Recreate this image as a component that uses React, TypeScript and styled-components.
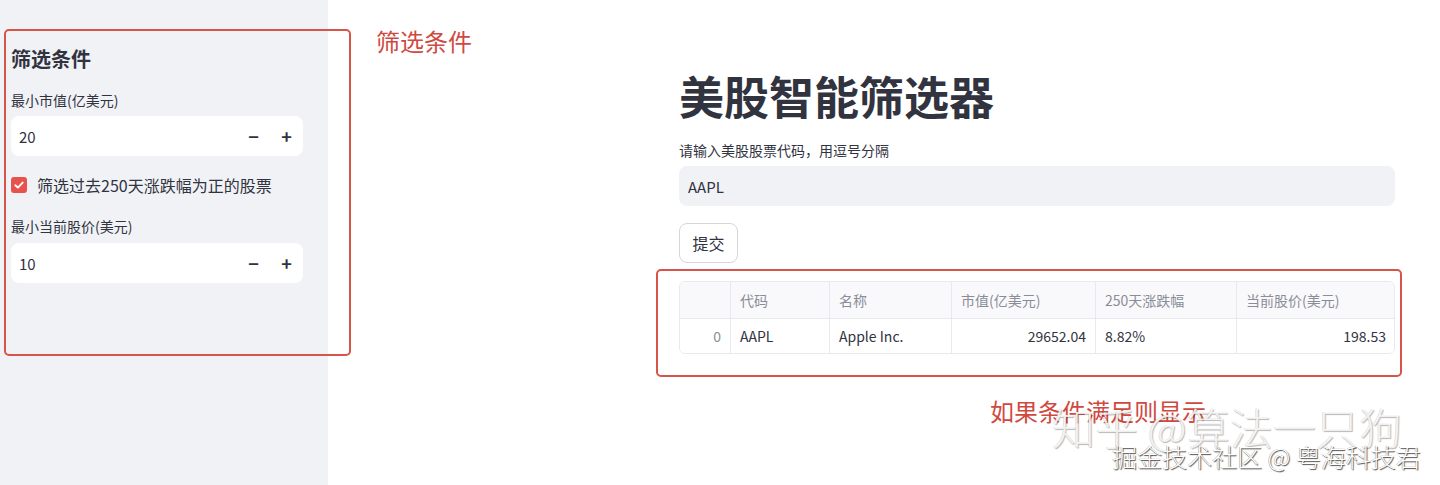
import React from "react";
import styled, { createGlobalStyle } from "styled-components";

const Global = createGlobalStyle`
  html, body { margin: 0; padding: 0; background: #ffffff; }
  body { font-family: "Noto Sans CJK SC", "Noto Sans", sans-serif; color: #31333f; }
  * { box-sizing: border-box; }
`;

const Page = styled.div`
  position: relative;
  display: flex;
  width: 1440px;
  height: 485px;
  overflow: hidden;
`;

const Sidebar = styled.aside`
  width: 328px;
  flex: none;
  background: #f0f2f6;
  padding: 45px 25px 0 11px;
  display: flex;
  flex-direction: column;
`;

const SideTitle = styled.h2`
  margin: 0 0 17px;
  font-size: 20px;
  line-height: 28px;
  font-weight: 700;
  color: #31333f;
`;

const FieldLabel = styled.div<{ $mt?: number; $mb?: number }>`
  font-size: 14px;
  line-height: 20px;
  color: #31333f;
  margin-top: ${(p) => p.$mt ?? 0}px;
  margin-bottom: ${(p) => p.$mb ?? 6}px;
`;

const NumberBox = styled.div`
  height: 40px;
  background: #ffffff;
  border-radius: 8px;
  display: flex;
  align-items: center;
  padding-left: 8px;
`;

const NumberValue = styled.span`
  flex: 1;
  font-size: 15px;
  color: #31333f;
`;

const StepButton = styled.span`
  width: 33px;
  height: 40px;
  display: flex;
  align-items: center;
  justify-content: center;
  font-size: 18px;
  font-weight: 700;
  color: #31333f;
`;

const CheckRow = styled.label`
  display: flex;
  align-items: center;
  gap: 10px;
  margin-top: 17px;
  height: 24px;
  font-size: 16px;
  color: #31333f;
`;

const CheckBox = styled.span`
  width: 16px;
  height: 16px;
  border-radius: 3px;
  background: #e8524d;
  display: flex;
  align-items: center;
  justify-content: center;
`;

const Main = styled.main`
  flex: 1;
  padding: 68px 45px 0 351px;
  display: flex;
  flex-direction: column;
  align-items: flex-start;
`;

const Title = styled.h1`
  margin: 0 0 16px;
  font-size: 45px;
  line-height: 56px;
  font-weight: 700;
  color: #31333f;
`;

const TextInput = styled.div`
  width: 100%;
  height: 40px;
  background: #f0f2f6;
  border-radius: 8px;
  display: flex;
  align-items: center;
  padding-left: 9px;
  font-size: 15px;
  color: #31333f;
`;

const Button = styled.button`
  margin-top: 17px;
  width: 59px;
  height: 40px;
  border: 1px solid #d6d6d9;
  border-radius: 8px;
  background: #ffffff;
  font-family: inherit;
  font-size: 16px;
  color: #31333f;
`;

const Table = styled.div`
  margin-top: 18px;
  width: 716px;
  border: 1px solid #e8e9ee;
  border-radius: 6px;
  overflow: hidden;
  display: grid;
  grid-template-columns: 51px 99px 122px 144px 141px 158px;
`;

const Cell = styled.div<{ $head?: boolean; $right?: boolean; $index?: boolean; $last?: boolean }>`
  height: ${(p) => (p.$head ? 37 : 34)}px;
  display: flex;
  align-items: center;
  justify-content: ${(p) => (p.$right ? "flex-end" : "flex-start")};
  padding: 0 9px;
  font-size: 14px;
  color: ${(p) => (p.$head || p.$index ? "#8a8d98" : "#31333f")};
  background: ${(p) => (p.$head ? "#f9f9fb" : "#ffffff")};
  border-right: ${(p) => (p.$last ? "none" : "1px solid #e8e9ee")};
  border-bottom: ${(p) => (p.$head ? "1px solid #e8e9ee" : "none")};
`;

const AnnoBox = styled.div<{ $l: number; $t: number; $w: number; $h: number }>`
  position: absolute;
  left: ${(p) => p.$l}px;
  top: ${(p) => p.$t}px;
  width: ${(p) => p.$w}px;
  height: ${(p) => p.$h}px;
  border: 2px solid #d6544a;
  border-radius: 5px;
  pointer-events: none;
`;

const AnnoText = styled.div<{ $l: number; $t: number }>`
  position: absolute;
  left: ${(p) => p.$l}px;
  top: ${(p) => p.$t}px;
  font-size: 24px;
  line-height: 24px;
  color: #d0493f;
  white-space: nowrap;
`;

const Watermark = styled.div<{ $l: number; $t: number; $size: number; $strong?: boolean }>`
  position: absolute;
  left: ${(p) => p.$l}px;
  top: ${(p) => p.$t}px;
  font-size: ${(p) => p.$size}px;
  line-height: ${(p) => p.$size}px;
  font-weight: 300;
  white-space: nowrap;
  color: ${(p) => (p.$strong ? "#ffffff" : "rgba(255,255,255,0.85)")};
  text-shadow: ${(p) =>
    p.$strong
      ? "1px 1px 1px rgba(0,0,0,0.7), -0.5px -0.5px 0.5px rgba(0,0,0,0.4)"
      : "1px 1px 1px rgba(0,0,0,0.28), -0.5px -0.5px 0.5px rgba(0,0,0,0.2)"};
`;

const NumberInput = ({ value }: { value: string }) => (
  <NumberBox>
    <NumberValue>{value}</NumberValue>
    <StepButton>−</StepButton>
    <StepButton>+</StepButton>
  </NumberBox>
);

const headers = ["", "代码", "名称", "市值(亿美元)", "250天涨跌幅", "当前股价(美元)"];
const row = [
  { v: "0", right: true, index: true },
  { v: "AAPL" },
  { v: "Apple Inc." },
  { v: "29652.04", right: true },
  { v: "8.82%" },
  { v: "198.53", right: true },
];

export default function App() {
  return (
    <Page>
      <Global />
      <Sidebar>
        <SideTitle>筛选条件</SideTitle>
        <FieldLabel>最小市值(亿美元)</FieldLabel>
        <NumberInput value="20" />
        <CheckRow>
          <CheckBox>
            <svg width="12" height="12" viewBox="0 0 12 12">
              <path d="M2.3 6.2 L4.9 8.6 L9.7 3.6" fill="none" stroke="#fff" strokeWidth="1.9" strokeLinecap="round" strokeLinejoin="round" />
            </svg>
          </CheckBox>
          筛选过去250天涨跌幅为正的股票
        </CheckRow>
        <FieldLabel $mt={19} $mb={7}>最小当前股价(美元)</FieldLabel>
        <NumberInput value="10" />
      </Sidebar>
      <Main>
        <Title>美股智能筛选器</Title>
        <FieldLabel>请输入美股股票代码，用逗号分隔</FieldLabel>
        <TextInput>AAPL</TextInput>
        <Button>提交</Button>
        <Table>
          {headers.map((h, i) => (
            <Cell key={"h" + i} $head $last={i === headers.length - 1}>
              {h}
            </Cell>
          ))}
          {row.map((c, i) => (
            <Cell key={"r" + i} $right={c.right} $index={c.index} $last={i === row.length - 1}>
              {c.v}
            </Cell>
          ))}
        </Table>
      </Main>

      <AnnoBox $l={4} $t={29} $w={347} $h={327} />
      <AnnoText $l={376} $t={29}>筛选条件</AnnoText>
      <AnnoBox $l={656} $t={269} $w={746} $h={108} />
      <AnnoText $l={990} $t={399}>如果条件满足则显示</AnnoText>
      <Watermark $l={1052} $t={405} $size={43}>知乎 @算法一只狗</Watermark>
      <Watermark $l={1112} $t={444} $size={25} $strong>掘金技术社区 @ 粤海科技君</Watermark>
    </Page>
  );
}
